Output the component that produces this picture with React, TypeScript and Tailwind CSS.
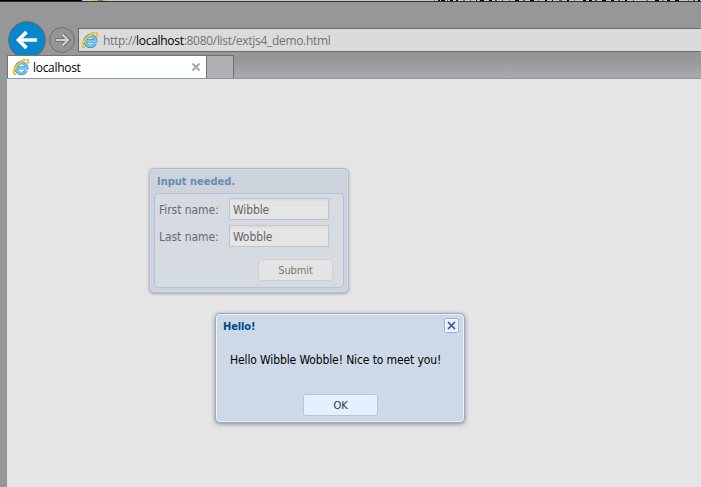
import type { ReactNode } from "react";

const SPECKS = [
  [434, 1, "#b5651d"], [438, 2, "#111"], [441, 4, "#000"], [447, 1, "#1f5f9a"], [450, 3, "#000"], [456, 2, "#111"], [463, 2, "#b5651d"],
  [470, 1, "#1f5f9a"], [476, 1, "#111"], [480, 4, "#000"], [489, 3, "#000"], [495, 2, "#1f5f9a"], [502, 1, "#333"], [509, 1, "#b5651d"],
  [515, 4, "#000"], [523, 2, "#1f5f9a"], [530, 4, "#000"], [538, 1, "#b5651d"], [545, 2, "#000"], [552, 1, "#111"], [559, 3, "#1f5f9a"],
  [567, 2, "#000"], [574, 1, "#b5651d"], [583, 3, "#000"], [589, 3, "#000"], [595, 2, "#1f5f9a"], [602, 4, "#000"], [611, 3, "#000"],
  [618, 2, "#1f5f9a"], [625, 2, "#000"], [633, 1, "#1f5f9a"], [646, 2, "#b5651d"], [655, 4, "#000"], [662, 2, "#b5651d"], [667, 3, "#000"],
  [675, 4, "#000"], [688, 1, "#b5651d"], [693, 2, "#1f5f9a"], [698, 2, "#000"],
] as const;

function IeIcon() {
  return (
    <svg className="size-4 shrink-0" viewBox="0 0 16 16" fill="none">
      <path d="M4.6 8.9h9.3A5.4 5.4 0 1 0 13.3 11.6" stroke="#3a93c8" strokeWidth="3.3" />
      <path d="M4.6 8.9h9.2A5.3 5.3 0 1 0 13.2 11.5" stroke="#74c8ef" strokeWidth="2" />
      <path d="M3 15C-.8 15.6.2 10.4 4.3 6 8.5 1.5 13.6-.7 15 1.1c.6.8.4 2-.2 3.3" stroke="#d9a514" strokeWidth="1.9" />
      <path d="M2.8 14.8C-.5 15.2.6 10.3 4.5 6.1 8.6 1.8 13.4-.4 14.7 1.2c.5.7.4 1.7 0 2.8" stroke="#ffd83a" strokeWidth="1.1" />
    </svg>
  );
}

function Field({ label, value }: { label: string; value: string }) {
  return (
    <div className="flex h-[22px] items-center">
      <div className="w-[70px] pt-px tracking-[-0.05px] text-[#696a6c]">{label}</div>
      <div className="h-[22px] w-[100px] border border-[#bfc4ce] bg-[#e5e5e5] pl-[3px] leading-[22px] tracking-[-0.1px] text-[#666] shadow-[inset_0_2px_1px_#dedede]">{value}</div>
    </div>
  );
}

function Frame({ className, children }: { className: string; children: ReactNode }) {
  return <section className={`absolute rounded-[5px] border ${className}`}>{children}</section>;
}

export default function App() {
  return (
    <div className="relative h-[487px] w-[701px] overflow-hidden bg-[#979797] font-['DejaVu_Sans_Condensed','DejaVu_Sans',sans-serif] text-[12px]">
      <div className="flex h-px bg-[#c9cbc9]">
        <div className="w-[82px] bg-black" />
        <svg className="h-px w-[619px]" viewBox="82 0 619 1">
          <path d="M93 0h5v1h-5zM104 0h3v1h-3z" fill="#e8be22" />
          <path d="M98 0h5v1h-5z" fill="#2991bd" />
          {SPECKS.map(([x, w, c]) => <rect key={x} x={x} y="0" width={w} height="1" fill={c} />)}
        </svg>
      </div>
      <div className="h-px bg-[#303030]" />
      <header className="flex h-[53px] pt-[19px] font-['Open_Sans',sans-serif]">
        <svg className="-mt-px ml-[7px] h-[36px] w-[71px] shrink-0" viewBox="7 20 71 36" fill="none">
          <circle cx="27" cy="40" r="18.3" fill="#0786c9" stroke="#5c6870" strokeWidth="1" />
          <path d="M37 40H18.5M26.5 32L18.5 40l8 8" stroke="#fff" strokeWidth="3.7" />
          <circle cx="62" cy="40" r="12.5" fill="#959595" stroke="#6d6d6d" />
          <path d="M55.5 40h12M62.5 34.2l5.8 5.8-5.8 5.8" stroke="#707070" strokeWidth="4" />
          <path d="M56 40h11.5M62.5 34.5l5.5 5.5-5.5 5.5" stroke="#d0d0d0" strokeWidth="2.2" />
        </svg>
        <div className="mt-[7px] flex h-6 flex-1 items-center border border-r-0 border-[#6a6a6a] bg-[#dbdbdb] pl-[3px]">
          <IeIcon />
          <span className="ml-[5px] whitespace-nowrap pt-[2px] text-[12px] tracking-[-0.3px] text-[#737373]">http://<span className="text-black">localhost</span>:8080/list/extjs4_demo.html</span>
        </div>
      </header>
      <nav className="flex h-6 border-b border-[#819ab5] bg-gradient-to-b from-[#979797] from-20% to-[#ababab] font-['Open_Sans',sans-serif]">
        <div className="w-[7px] bg-[#979797]" />
        <div className="flex w-[200px] items-center border border-b-0 border-[#737373] bg-white pl-[5px] text-black">
          <IeIcon />
          <span className="ml-[4px] pt-[2px] text-[12px] tracking-[-0.3px]">localhost</span>
          <svg className="ml-auto mr-[5px] size-[10px]" viewBox="0 0 10 10"><path d="M1.5 1.5l7 7m0-7l-7 7" stroke="#a5a5a5" strokeWidth="2" /></svg>
        </div>
        <div className="w-[27px] border border-b-0 border-l-0 border-[#6f6f6f] bg-[#b0b0b0]" />
      </nav>
      <main className="ml-[7px] h-[408px] bg-[#e5e5e5]" />

      <Frame className="left-[149px] top-[168px] h-[125px] w-[200px] border-[#b1bccb] bg-[#ccd3dc] shadow-[inset_0_0_0_1px_#d6dce3,0_1px_3px_#aaa]">
        <h2 className="h-6 pl-[7px] pt-px text-[11px] font-bold leading-[24px] text-[#6a8bb1]">Input needed.</h2>
        <div className="ml-1 flex h-[95px] w-[190px] flex-col gap-[5px] rounded-[4px] border border-[#b3c3da] bg-[#d6dae1] pl-[4px] pt-[4px]">
          <Field label="First name:" value="Wibble" />
          <Field label="Last name:" value="Wobble" />
          <button className="ml-[99px] mt-[7px] h-[22px] w-[75px] shrink-0 rounded-[3px] border border-[#cfcfcf] bg-[#e4e4e4] pt-px text-[11px] leading-5 tracking-[-0.1px] text-[#777]">Submit</button>
        </div>
      </Frame>

      <Frame className="left-[215px] top-[313px] h-[110px] w-[250px] border-[#9baac4] bg-[#cdd9e7] shadow-[inset_0_0_0_1px_#e9f2fc,0_1px_4px_#888]">
        <div className="flex h-6 justify-between pl-[7px] pr-[5px] pt-1">
          <h2 className="text-[11px] font-bold leading-[17px] tracking-[-0.1px] text-[#04468c]">Hello!</h2>
          <svg className="size-[15px]" viewBox="0 0 15 15"><rect x=".5" y=".5" width="14" height="14" rx="2" fill="#e4edfa" stroke="#8faddd" /><rect x="1.5" y="1.5" width="12" height="12" rx="1" fill="none" stroke="#fff" /><path d="M4 4l7 7m0-7l-7 7" stroke="#2e4e9e" strokeWidth="1.5" /></svg>
        </div>
        <p className="mt-[14px] whitespace-nowrap pl-[14px] leading-4 tracking-[-0.12px] text-black">Hello Wibble Wobble! Nice to meet you!</p>
        <button className="ml-[87px] mt-[26px] block h-[22px] w-[75px] rounded-[3px] border border-[#a9c7ee] bg-[#e3f1ff] pt-px text-[11px] leading-5 tracking-[-0.2px] text-[#333]">OK</button>
      </Frame>
    </div>
  );
}
